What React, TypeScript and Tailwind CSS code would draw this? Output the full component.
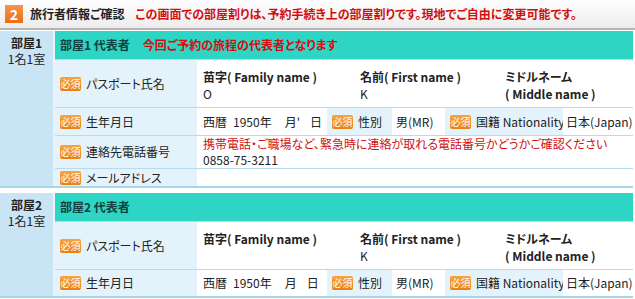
import type { ReactNode } from "react";

// Required-field marker shown before each label
function Req() {
  return (
    <span className="inline-flex h-[14px] w-[21px] shrink-0 items-center justify-center rounded-[2px] bg-gradient-to-b from-[#f7a440] to-[#e8800e] text-[10px] leading-none text-white">
      必須
    </span>
  );
}

function Label({ children, className = "" }: { children: ReactNode; className?: string }) {
  return (
    <div className={`flex shrink-0 items-center gap-[5px] bg-[#e4f3fb] pl-[5px] ${className}`}>
      <Req />
      <span className="whitespace-nowrap">{children}</span>
    </div>
  );
}

function PassportRow({ first, last }: { first: string; last: string }) {
  return (
    <div className="flex h-[48px] border-t border-[#b5dbee]">
      <Label className="w-[142px]">パスポート氏名</Label>
      <div className="flex flex-1 bg-white pt-[8px] leading-[17px]">
        <div className="w-[163px] pl-[6px]">
          <div className="font-bold">苗字( Family name )</div>
          <div>{last}</div>
        </div>
        <div className="w-[145px]">
          <div className="font-bold">名前( First name )</div>
          <div>{first}</div>
        </div>
        <div className="flex-1 font-bold">
          <div>ミドルネーム</div>
          <div>( Middle name )</div>
        </div>
      </div>
    </div>
  );
}

function BirthRow({ month, h }: { month: string; h: string }) {
  return (
    <div className={`flex border-t border-[#b5dbee] ${h}`}>
      <Label className="w-[142px]">生年月日</Label>
      <div className="flex w-[130px] items-center bg-white pl-[6px] whitespace-nowrap">
        <span>西暦</span>
        <span className="ml-[6px]">1950年</span>
        <span className="ml-[13px]">{month}</span>
        <span className="ml-[10px]">日</span>
      </div>
      <Label className="w-[65px]">性別</Label>
      <div className="flex w-[53px] items-center bg-white pl-[4px] whitespace-nowrap">男(MR)</div>
      <Label className="w-[118px]">国籍 Nationality</Label>
      <div className="flex flex-1 items-center bg-white pl-[3px] whitespace-nowrap">日本(Japan)</div>
    </div>
  );
}

function RoomHead({ room, note }: { room: string; note?: string }) {
  return (
    <div className="flex h-[28px] items-center gap-[13px] bg-[#2ed4c4] pl-[5px]">
      <span className="font-bold text-[#123f3f]">{room} 代表者</span>
      {note && <span className="font-bold text-[#d80c0c]">{note}</span>}
    </div>
  );
}

function RoomSide({ room }: { room: string }) {
  return (
    <div className="w-[55px] shrink-0 border-r-2 border-[#e9f5fc] bg-[#c9e4f5] pt-[4px] text-center leading-[16px]">
      <div className="font-bold">{room}</div>
      <div>1名1室</div>
    </div>
  );
}

export default function App() {
  return (
    <div className="w-[635px] h-[299px] overflow-hidden bg-white text-[12px] text-[#222] font-['Noto_Sans_CJK_JP',sans-serif] [font-feature-settings:'palt']">
      {/* step header */}
      <div className="flex h-[30px] items-center gap-[7px] border-b-2 border-[#b4b4b4] bg-gradient-to-b from-white to-[#ececec] pl-[5px]">
        <span className="flex h-[18px] w-[18px] items-center justify-center bg-gradient-to-b from-[#f6954a] to-[#ec6c14] text-[14px] font-bold leading-none text-white">
          2
        </span>
        <span className="font-bold text-[#222]">旅行者情報ご確認</span>
        <span className="ml-[4px] font-bold text-[#d10f0f]">
          この画面での部屋割りは、予約手続き上の部屋割りです。現地でご自由に変更可能です。
        </span>
      </div>

      {/* room 1 */}
      <div className="mt-[1px] mr-[2px] flex border-b-2 border-r-2 border-[#a9d4e9]">
        <RoomSide room="部屋1" />
        <div className="flex flex-1 flex-col">
          <RoomHead room="部屋1" note="今回ご予約の旅程の代表者となります" />
          <PassportRow last="O" first="K" />
          <BirthRow month="月'" h="h-[28px]" />
          <div className="flex h-[33px] border-t border-[#b5dbee]">
            <Label className="w-[142px]">連絡先電話番号</Label>
            <div className="flex flex-1 flex-col justify-center bg-white pl-[6px] leading-[16px]">
              <div className="text-[#d10f0f]">携帯電話・ご職場など、緊急時に連絡が取れる電話番号かどうかご確認ください</div>
              <div>0858-75-3211</div>
            </div>
          </div>
          <div className="flex h-[18px] border-t border-[#b5dbee]">
            <Label className="w-[142px]">メールアドレス</Label>
            <div className="flex-1 bg-white" />
          </div>
        </div>
      </div>

      {/* room 2 */}
      <div className="mt-[5px] mr-[2px] flex border-b-2 border-r-2 border-[#a9d4e9]">
        <RoomSide room="部屋2" />
        <div className="flex flex-1 flex-col">
          <RoomHead room="部屋2" />
          <PassportRow last="" first="K" />
          <BirthRow month="月" h="h-[27px]" />
        </div>
      </div>
    </div>
  );
}
